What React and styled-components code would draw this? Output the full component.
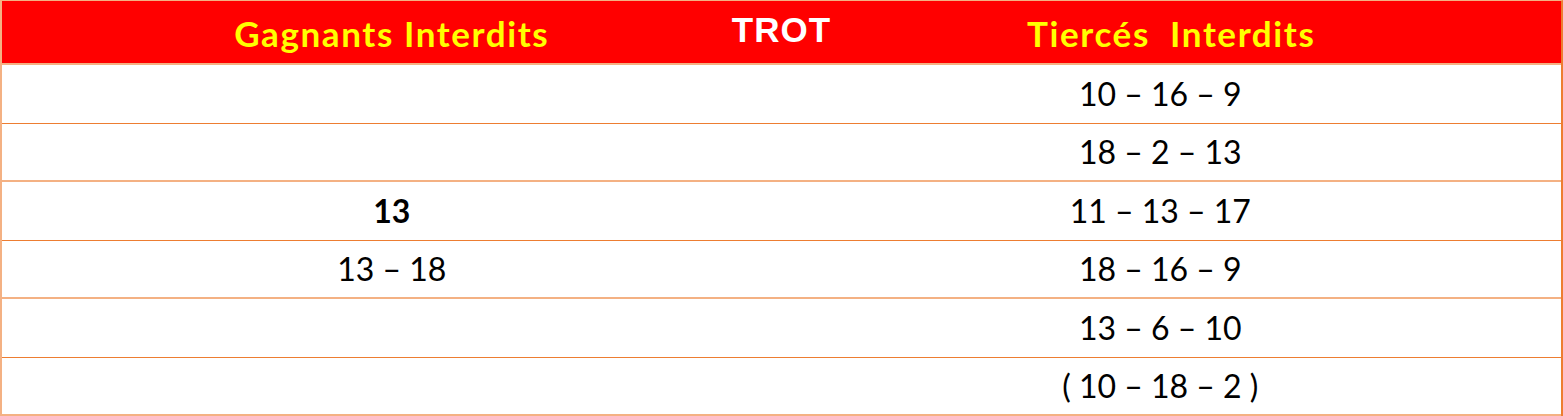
import React from 'react';
import styled, { createGlobalStyle } from 'styled-components';

const GlobalStyle = createGlobalStyle`
  html, body {
    margin: 0;
    padding: 0;
    background: #ffffff;
  }
`;

const light = '#f4b183';
const dark = '#ed7d31';

const Table = styled.div`
  position: relative;
  box-sizing: border-box;
  width: 1563px;
  height: 416px;
  display: grid;
  grid-template-rows: 64px repeat(6, 1fr);
  border-top: 1px solid ${light};
  border-left: 2px solid ${light};
  border-right: 2px solid ${dark};
  font-family: 'Lato', 'Liberation Sans', sans-serif;
`;

const Row = styled.div`
  display: grid;
  grid-template-columns: 1fr 1fr;
  box-sizing: border-box;
  border-bottom: ${(p) => (p.$dark ? `1px solid ${dark}` : `2px solid ${light}`)};
  background: ${(p) => (p.$head ? '#ff0000' : '#ffffff')};
`;

const HeadCell = styled.div`
  display: flex;
  align-items: center;
  justify-content: center;
  color: #ffff00;
  font-weight: 700;
  font-size: 35px;
  letter-spacing: 1.6px;
  white-space: pre;
  padding-top: 2px;
`;

const Cell = styled.div`
  display: flex;
  align-items: center;
  justify-content: center;
  color: #000000;
  font-size: 32px;
  font-weight: ${(p) => (p.$bold ? 700 : 400)};
  white-space: pre;
  padding-right: ${(p) => p.$right || 0}px;
`;

const Trot = styled.div`
  position: absolute;
  top: 9px;
  left: 0;
  right: 0;
  text-align: center;
  color: #ffffff;
  font-family: 'Liberation Sans', Arial, sans-serif;
  font-weight: 700;
  font-size: 35px;
  letter-spacing: 1px;
  pointer-events: none;
`;

const rows = [
  ['', '10 – 16 – 9'],
  ['', '18 – 2 – 13'],
  ['13', '11 – 13 – 17', true],
  ['13 – 18', '18 – 16 – 9'],
  ['', '13 – 6 – 10'],
  ['', '( 10 – 18 – 2 )'],
];

export default function App() {
  return (
    <>
      <GlobalStyle />
      <Table>
        <Row $head>
          <HeadCell>Gagnants Interdits</HeadCell>
          <HeadCell>Tiercés  Interdits</HeadCell>
        </Row>
        {rows.map((r, i) => (
          <Row key={i} $dark={i % 2 === 0}>
            <Cell $bold={r[2]}>{r[0]}</Cell>
            <Cell $right={22}>{r[1]}</Cell>
          </Row>
        ))}
        <Trot>TROT</Trot>
      </Table>
    </>
  );
}
